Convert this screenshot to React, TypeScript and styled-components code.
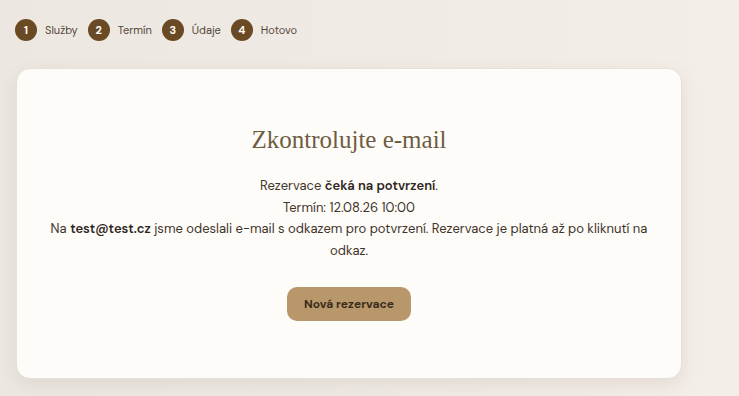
import styled, { createGlobalStyle } from 'styled-components'

const GlobalStyle = createGlobalStyle`
    html, body {
        margin: 0;
        padding: 0;
    }
    body {
        min-height: 396px;
        background: linear-gradient(90deg, #ece8e1 0%, #f0ebe5 60%, #f4eee9 100%);
        font-family: 'DM Sans', Inter, 'Noto Sans', sans-serif;
        color: #3f342a;
    }
`

const Page = styled.div`
    padding: 19px 57px 0 16px;
`

const Steps = styled.ol`
    display: flex;
    align-items: center;
    gap: 10px;
    list-style: none;
    margin: 0 0 27px -1px;
    padding: 0;
`

const Step = styled.li`
    display: flex;
    align-items: center;
    gap: 8px;
    font-size: 11px;
    color: #55463a;
`

const StepNumber = styled.span`
    display: flex;
    align-items: center;
    justify-content: center;
    width: 22px;
    height: 22px;
    border-radius: 50%;
    background: #6a4a24;
    color: #fff;
    font-size: 11px;
    font-weight: 700;
`

const Card = styled.section`
    box-sizing: border-box;
    width: 666px;
    height: 311px;
    padding: 56px 30px 0;
    background: #fefcf8;
    border: 1px solid #e6e0d6;
    border-radius: 14px;
    box-shadow: 0 6px 18px rgba(120, 100, 70, 0.12);
    text-align: center;
`

const Title = styled.h1`
    margin: 0 0 20px;
    font-family: 'Liberation Serif', 'DejaVu Serif', serif;
    font-weight: 400;
    font-size: 25px;
    line-height: 30px;
    color: #6e5c42;
`

const Text = styled.p`
    margin: 0;
    font-size: 13px;
    line-height: 21.5px;
    color: #3f342a;

    strong {
        font-weight: 600;
        color: #2f261e;
    }
`

const Button = styled.button`
    margin-top: 26px;
    width: 124px;
    height: 34px;
    border: none;
    border-radius: 10px;
    background: #b8986a;
    color: #3a2c1c;
    font-family: inherit;
    font-size: 12px;
    font-weight: 700;
    cursor: pointer;
`

const steps = ['Služby', 'Termín', 'Údaje', 'Hotovo']

export default function App() {
    return (
        <>
            <GlobalStyle />
            <Page>
                <Steps>
                    {steps.map((label, i) => (
                        <Step key={label}>
                            <StepNumber>{i + 1}</StepNumber>
                            {label}
                        </Step>
                    ))}
                </Steps>
                <Card>
                    <Title>Zkontrolujte e-mail</Title>
                    <Text>
                        Rezervace <strong>čeká na potvrzení</strong>.
                    </Text>
                    <Text>Termín: 12.08.26 10:00</Text>
                    <Text>
                        Na <strong>test@test.cz</strong> jsme odeslali e-mail s odkazem pro
                        potvrzení. Rezervace je platná až po kliknutí na odkaz.
                    </Text>
                    <Button>Nová rezervace</Button>
                </Card>
            </Page>
        </>
    )
}
